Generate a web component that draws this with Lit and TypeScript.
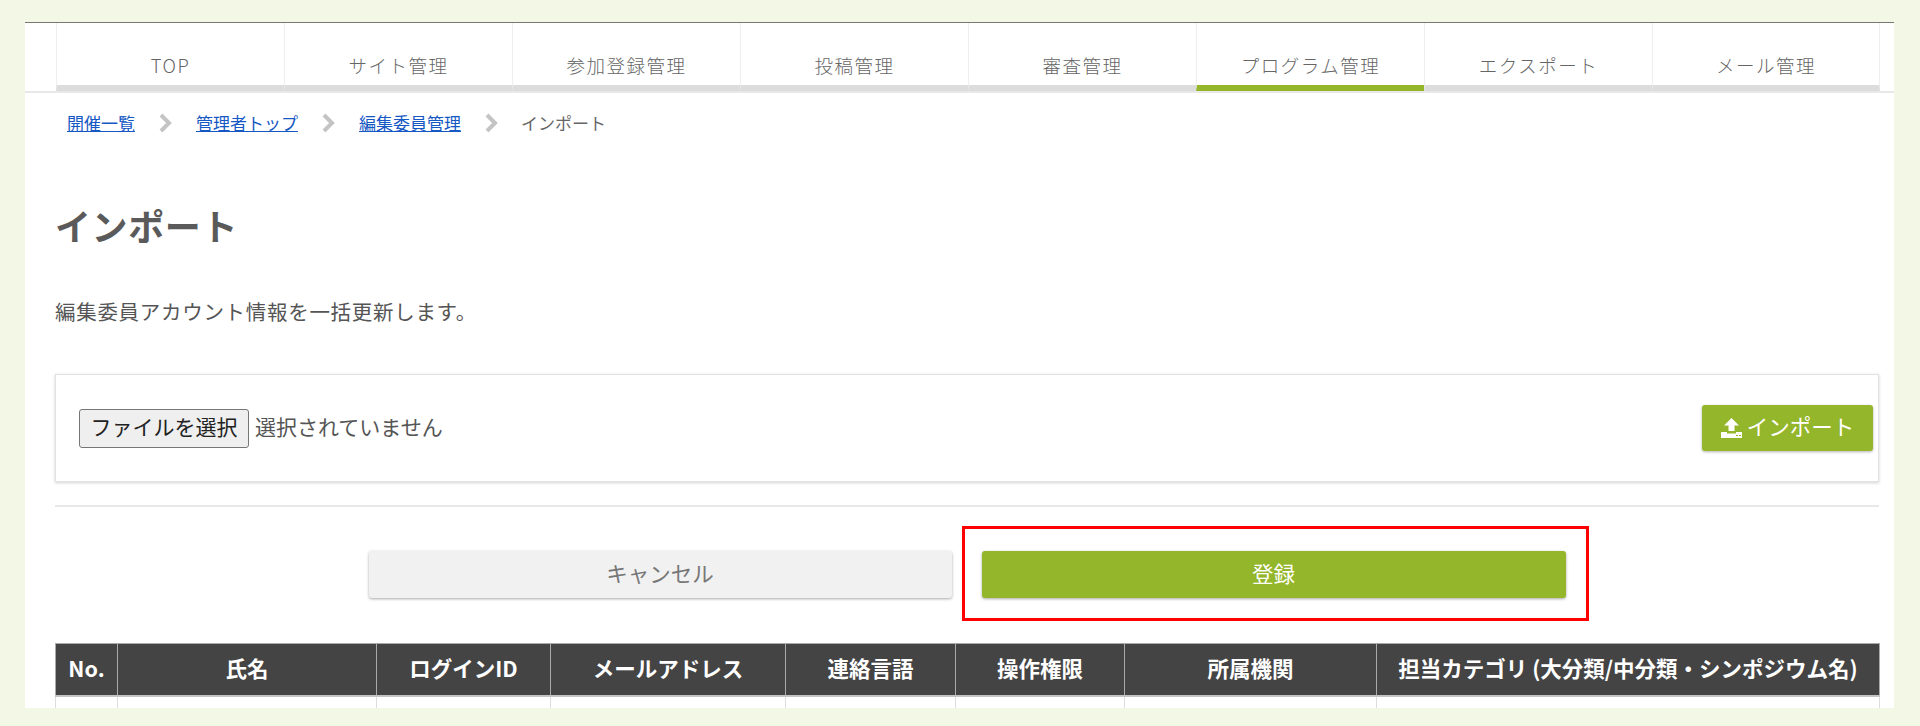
import { LitElement, html, css } from "lit";
import { customElement } from "lit/decorators.js";

const TABS = ["TOP", "サイト管理", "参加登録管理", "投稿管理", "審査管理", "プログラム管理", "エクスポート", "メール管理"];
const COLS: [string, number][] = [
  ["No.", 62], ["氏名", 259], ["ログインID", 174], ["メールアドレス", 235], ["連絡言語", 170],
  ["操作権限", 169], ["所属機関", 252], ["担当カテゴリ (大分類/中分類・シンポジウム名)", 503],
];

@customElement("app-root")
export class AppRoot extends LitElement {
  static styles = css`
    :host {
      display: block; height: 726px; box-sizing: border-box; padding: 22px 26px 18px 25px;
      background: #f3f8e6; color: #555;
      font-family: "Noto Sans CJK JP", "Liberation Sans", sans-serif;
    }
    .panel { position: relative; height: 100%; box-sizing: border-box; background: #fff; border-top: 1px solid #77776f; overflow: hidden; }
    .nav { display: flex; padding: 0 14px 0 31px; height: 68px; border-bottom: 2px solid #e8e8e8; box-sizing: content-box; }
    .tab {
      width: 228px; box-sizing: border-box; border-left: 1px solid #eee; border-bottom: 6px solid #dcdcdc;
      display: flex; align-items: center; justify-content: center; padding-top: 21px;
      font-size: 18.5px; letter-spacing: 1.5px; font-weight: 300; color: #666;
    }
    .tab:last-child { border-right: 1px solid #eee; }
    .tab.on { border-bottom-color: #94b62a; }
    .crumbs { display: flex; align-items: center; height: 22px; margin: 19px 0 0 42px; font-size: 17px; line-height: 22px; }
    .crumbs a { color: #1558c4; text-decoration: underline; }
    .crumbs span { color: #666; }
    .chev { width: 13px; height: 20px; margin: 0 24px; flex: none; }
    .chev.b { margin: 0 23px 0 24px; }
    .main { padding: 0 15px 0 30px; }
    h1 { margin: 65px 0 0; font-size: 36px; line-height: 52px; font-weight: 700; color: #5a5a5a; letter-spacing: 0.6px; }
    .lead { margin: 45px 0 0; font-size: 20.5px; line-height: 30px; color: #555; letter-spacing: 0.7px; }
    .card {
      margin-top: 48px; height: 108px; box-sizing: border-box; border: 1px solid #e2e2e2; box-shadow: 0 1px 3px rgba(0,0,0,.18);
      display: flex; align-items: center; justify-content: space-between; padding: 0 5px 0 23px; background: #fff;
    }
    .file { display: flex; align-items: center; gap: 6px; font-size: 21px; color: #555; }
    .file span { padding-bottom: 4px; }
    .fbtn {
      width: 170px; height: 39px; box-sizing: border-box; padding: 0 0 4px; border: 1px solid #767676; border-radius: 3px;
      background: #efefef; color: #222; font: inherit; font-size: 21px; line-height: 1;
    }
    .imp {
      width: 171px; height: 46px; border: 0; border-radius: 3px; background: #94b62a; color: #fff; padding: 0;
      display: flex; align-items: center; justify-content: center; gap: 5px; font: inherit; font-size: 21.5px;
      box-shadow: 0 1px 3px rgba(0,0,0,.3);
    }
    .imp span { padding-bottom: 5px; }
    .imp svg { width: 21px; height: 20px; flex: none; margin-bottom: 1px; }
    hr { margin: 23px 0 0; border: 0; border-top: 2px solid #e8e8e8; }
    .actions { display: flex; justify-content: center; gap: 30px; margin-top: 44px; }
    .act {
      width: 583px; height: 47px; border: 0; border-radius: 3px; padding: 0 0 4px; font: inherit; font-size: 21.5px;
      box-shadow: 0 1px 3px rgba(0,0,0,.35);
    }
    .act.c { background: #f1f1f1; color: #777; }
    .act.g { background: #94b62a; color: #fff; width: 584px; }
    .mark { position: absolute; left: 937px; top: 503px; width: 627px; height: 95px; box-sizing: border-box; border: 3px solid #f00; }
    table { border-collapse: collapse; table-layout: fixed; width: 1824px; margin-top: 45px; }
    th {
      height: 52px; padding: 0 0 4px; background: #444; color: #fff; border: 1px solid #aaa; border-bottom: 2px solid #c4c4c4;
      font-size: 21.5px; font-weight: 700; text-align: center; box-sizing: border-box; white-space: nowrap;
    }
    td { height: 40px; border: 1px solid #ddd; }
  `;

  render() {
    const chev = (b = false) => html`<svg class="chev ${b ? "b" : ""}" viewBox="0 0 13 20"><path d="M2 2l8 8-8 8" fill="none" stroke="#c4c4c4" stroke-width="4"/></svg>`;
    return html`
      <div class="panel">
        <div class="nav">
          ${TABS.map((t) => html`<div class="tab ${t === "プログラム管理" ? "on" : ""}">${t}</div>`)}
        </div>
        <div class="crumbs">
          <a>開催一覧</a>${chev()}<a>管理者トップ</a>${chev()}<a>編集委員管理</a>${chev(true)}<span>インポート</span>
        </div>
        <div class="main">
          <h1>インポート</h1>
          <p class="lead">編集委員アカウント情報を一括更新します。</p>
          <div class="card">
            <div class="file"><button class="fbtn">ファイルを選択</button><span>選択されていません</span></div>
            <button class="imp">
              <svg viewBox="0 0 21 20"><path fill="#fff" fill-rule="evenodd" d="M10.5 0L18 7.5h-4.5V13h-6V7.5H3zM0 14h6v1.5h9V14h6v6H0zM15 17v1h2v-1zm3 0v1h2v-1z"/></svg>
              <span>インポート</span>
            </button>
          </div>
          <hr />
          <div class="actions">
            <button class="act c">キャンセル</button>
            <button class="act g">登録</button>
          </div>
          <table>
            <colgroup>${COLS.map(([, w]) => html`<col style="width:${w}px" />`)}</colgroup>
            <thead><tr>${COLS.map(([t]) => html`<th>${t}</th>`)}</tr></thead>
            <tbody><tr>${COLS.map(() => html`<td></td>`)}</tr></tbody>
          </table>
        </div>
        <div class="mark"></div>
      </div>
    `;
  }
}
